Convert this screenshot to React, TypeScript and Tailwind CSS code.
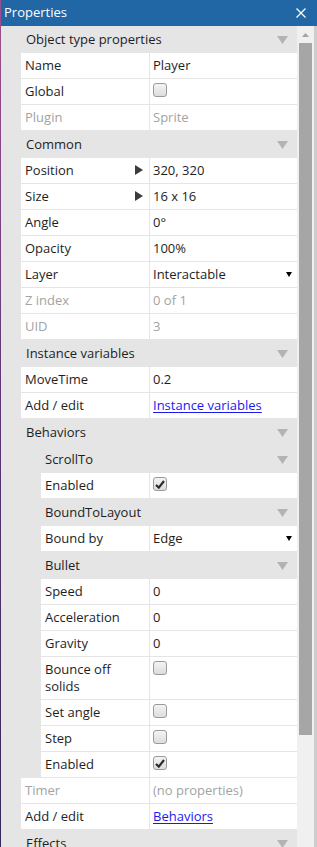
import type { ReactNode } from 'react'

const FONT = { fontFamily: '"Open Sans", "Noto Sans", sans-serif' }

function Tri({ className = '' }: { className?: string }) {
  return (
    <svg width="11" height="8" viewBox="0 0 11 8" className={className}>
      <path d="M0 0 H11 L5.5 8 Z" fill="#b3b3b3" />
    </svg>
  )
}

function Header({ label, nested = false }: { label: string; nested?: boolean }) {
  return (
    <div className={`flex h-[27px] items-center pr-[9px] ${nested ? 'pl-[43px]' : 'pl-[24px]'}`}>
      <span className="flex-1 text-[13px] text-[#1e1e1e]">{label}</span>
      <Tri />
    </div>
  )
}

function Checkbox({ checked = false }: { checked?: boolean }) {
  return (
    <div className="mt-[0px] flex h-[14px] w-[14px] items-center justify-center rounded-[3px] border border-[#9a9a9a] bg-gradient-to-b from-[#f4f4f4] to-[#dcdcdc]">
      {checked && (
        <svg width="10" height="9" viewBox="0 0 10 9">
          <path d="M1 5 L3.8 7.6 L9 1" stroke="#2a2a2a" strokeWidth="2.2" fill="none" />
        </svg>
      )}
    </div>
  )
}

function Row({
  label,
  children,
  nested = false,
  muted = false,
  arrow = false,
  tall = false,
}: {
  label: ReactNode
  children?: ReactNode
  nested?: boolean
  muted?: boolean
  arrow?: boolean
  tall?: boolean
}) {
  return (
    <div className={`mb-[1px] flex ${nested ? 'pl-[39px]' : 'pl-[19px]'}`}>
      <div className={`flex flex-1 bg-white text-[13px] leading-[17px] ${tall ? 'min-h-[42px]' : 'min-h-[25px]'}`}>
        <div className={`flex flex-1 items-start border-r border-[#e5e5e5] py-[4px] pl-[4px] ${muted ? 'text-[#a3a3a3]' : 'text-[#1e1e1e]'}`}>
          <span className="flex-1">{label}</span>
          {arrow && (
            <svg width="8" height="10" viewBox="0 0 8 10" className="mr-[6px] mt-[3px]">
              <path d="M0 0 L8 5 L0 10 Z" fill="#3c3c3c" />
            </svg>
          )}
        </div>
        <div className={`flex w-[147px] items-start py-[4px] pl-[3px] ${muted ? 'text-[#a3a3a3]' : 'text-[#1e1e1e]'}`}>
          {children}
        </div>
      </div>
    </div>
  )
}

function Select({ value }: { value: string }) {
  return (
    <div className="flex flex-1 items-center pr-[5px]">
      <span className="flex-1">{value}</span>
      <svg width="6" height="5" viewBox="0 0 6 5">
        <path d="M0 0 H6 L3 5 Z" fill="#000" />
      </svg>
    </div>
  )
}

function Link({ text }: { text: string }) {
  return <span className="text-[#1a1aee] underline decoration-[1px] underline-offset-[2px]">{text}</span>
}

export default function App() {
  return (
    <div className="flex h-[847px] w-[317px] overflow-hidden" style={FONT}>
      {/* left edge of window behind */}
      <div className="w-[1px] bg-gradient-to-b from-[#a04e8e] via-[#5a3577] to-[#35275a]" />
      <div className="flex flex-1 flex-col">
        <div className="flex h-[26px] items-center bg-[#2166a5] pl-[3px] pr-[11px] text-white">
          <span className="flex-1 text-[13px]">Properties</span>
          <svg width="10" height="10" viewBox="0 0 10 10">
            <path d="M0.5 0.5 L9.5 9.5 M9.5 0.5 L0.5 9.5" stroke="#fff" strokeWidth="1.3" />
          </svg>
        </div>
        <div className="flex flex-1 overflow-hidden">
          <div className="w-[1px] bg-[#e5e5e5]" />
          <div className="flex-1 bg-[#e5e5e5]">
            <Header label="Object type properties" />
            <Row label="Name">Player</Row>
            <Row label="Global"><Checkbox /></Row>
            <Row label="Plugin" muted>Sprite</Row>
            <Header label="Common" />
            <Row label="Position" arrow>320, 320</Row>
            <Row label="Size" arrow>16 x 16</Row>
            <Row label="Angle">0°</Row>
            <Row label="Opacity">100%</Row>
            <Row label="Layer"><Select value="Interactable" /></Row>
            <Row label="Z index" muted>0 of 1</Row>
            <Row label="UID" muted>3</Row>
            <Header label="Instance variables" />
            <Row label="MoveTime">0.2</Row>
            <Row label="Add / edit"><Link text="Instance variables" /></Row>
            <Header label="Behaviors" />
            <Header label="ScrollTo" nested />
            <Row label="Enabled" nested><Checkbox checked /></Row>
            <Header label="BoundToLayout" nested />
            <Row label="Bound by" nested><Select value="Edge" /></Row>
            <Header label="Bullet" nested />
            <Row label="Speed" nested>0</Row>
            <Row label="Acceleration" nested>0</Row>
            <Row label="Gravity" nested>0</Row>
            <Row label={<>Bounce off<br />solids</>} nested tall><Checkbox /></Row>
            <Row label="Set angle" nested><Checkbox /></Row>
            <Row label="Step" nested><Checkbox /></Row>
            <Row label="Enabled" nested><Checkbox checked /></Row>
            <Row label="Timer" muted>(no properties)</Row>
            <Row label="Add / edit"><Link text="Behaviors" /></Row>
            <Header label="Effects" />
          </div>
          {/* scrollbar */}
          <div className="flex w-[17px] flex-col items-center bg-[#f0f0f0]">
            <div className="flex h-[17px] items-center justify-center">
              <svg width="7" height="4" viewBox="0 0 7 4">
                <path d="M0 4 L3.5 0 L7 4 Z" fill="#a3a3a3" />
              </svg>
            </div>
            <div className="h-[692px] w-[13px] bg-[#a6a6a6]" />
          </div>
          <div className="w-[3px] bg-[#cdcdcd]" />
        </div>
      </div>
    </div>
  )
}
